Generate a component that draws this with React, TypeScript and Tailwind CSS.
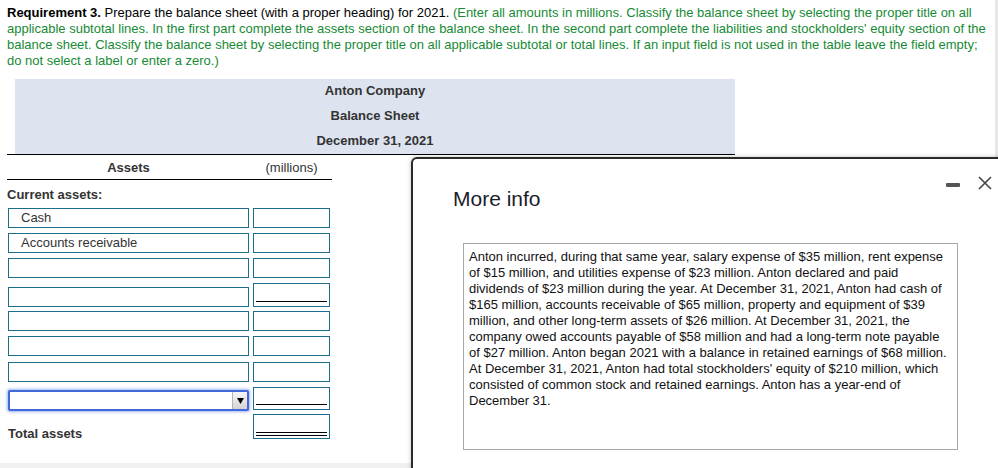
import React from "react";

function LabelBox({ text }: { text?: string }) {
  return (
    <div className="w-[241px] h-[20px] border border-[#1d6e8c] bg-white pl-[12px] leading-[18px] text-[#333] whitespace-nowrap">
      {text}
    </div>
  );
}

function AmountBox({ kind = "plain" }: { kind?: "plain" | "single" | "single2" | "double" }) {
  if (kind === "plain") {
    return <div className="w-[77px] h-[20px] border border-[#1d6e8c] bg-white" />;
  }
  if (kind === "single") {
    return (
      <div className="w-[77px] h-[24px] border border-[#1d6e8c] bg-white flex flex-col justify-end px-[2px] pb-[4px]">
        <div className="h-[1px] bg-black" />
      </div>
    );
  }
  if (kind === "single2") {
    return (
      <div className="w-[77px] h-[23px] mb-[1px] border border-[#1d6e8c] bg-white flex flex-col justify-end px-[2px] pb-[4px]">
        <div className="h-[1px] bg-black" />
      </div>
    );
  }
  return (
    <div className="w-[77px] h-[25px] border border-[#1d6e8c] bg-white flex flex-col justify-end gap-[2px] px-[2px] pb-[2px]">
      <div className="h-[1px] bg-black" />
      <div className="h-[1px] bg-black" />
    </div>
  );
}

const infoLines = [
  "Anton incurred, during that same year, salary expense of $35 million, rent expense",
  "of $15 million, and utilities expense of $23 million. Anton declared and paid",
  "dividends of $23 million during the year. At December 31, 2021, Anton had cash of",
  "$165 million, accounts receivable of $65 million, property and equipment of $39",
  "million, and other long-term assets of $26 million. At December 31, 2021, the",
  "company owed accounts payable of $58 million and had a long-term note payable",
  "of $27 million. Anton began 2021 with a balance in retained earnings of $68 million.",
  "At December 31, 2021, Anton had total stockholders' equity of $210 million, which",
  "consisted of common stock and retained earnings. Anton has a year-end of",
  "December 31.",
];

export default function App() {
  return (
    <div className="relative w-[998px] h-[468px] overflow-hidden bg-white font-['Liberation_Sans',Arial,sans-serif] text-[13px]">
      <div className="pl-[7px] pt-[5px]">
        <p className="leading-[16px] whitespace-nowrap text-black">
          <b>Requirement 3.</b> Prepare the balance sheet (with a proper heading) for 2021.{" "}
          <span className="text-[#168a34]">
            (Enter all amounts in millions. Classify the balance sheet by selecting the proper title on all
            <br />
            applicable subtotal lines. In the first part complete the assets section of the balance sheet. In the second part complete the liabilities and stockholders' equity section of the
            <br />
            balance sheet. Classify the balance sheet by selecting the proper title on all applicable subtotal or total lines. If an input field is not used in the table leave the field empty;
            <br />
            do not select a label or enter a zero.)
          </span>
        </p>

        <div className="mt-[10px] w-[728px] border-b border-black">
          <div className="ml-[8px] bg-[#dde4f0] font-bold text-[#333] text-center">
            <div className="h-[25px] leading-[23px]">Anton Company</div>
            <div className="h-[25px] leading-[23px]">Balance Sheet</div>
            <div className="h-[25px] leading-[23px]">December 31, 2021</div>
          </div>
        </div>

        <div className="w-[325px] h-[25px] border-b border-black flex items-center gap-[4px] pl-[1px] pt-[1px] text-[#333]">
          <div className="w-[241px] text-center font-bold">Assets</div>
          <div className="w-[77px] text-center">(millions)</div>
        </div>

        <div className="h-[23px] leading-[29px] font-bold text-[#333]">Current assets:</div>

        <div className="flex flex-col pl-[1px]">
          <div className="h-[25px] flex items-end gap-[4px]">
            <LabelBox text="Cash" />
            <AmountBox />
          </div>
          <div className="h-[25px] flex items-end gap-[4px]">
            <LabelBox text="Accounts receivable" />
            <AmountBox />
          </div>
          <div className="h-[25px] flex items-end gap-[4px]">
            <LabelBox />
            <AmountBox />
          </div>
          <div className="h-[29px] flex items-end gap-[4px]">
            <LabelBox />
            <AmountBox kind="single" />
          </div>
          <div className="h-[24px] flex items-end gap-[4px]">
            <LabelBox />
            <AmountBox />
          </div>
          <div className="h-[25px] flex items-end gap-[4px]">
            <LabelBox />
            <AmountBox />
          </div>
          <div className="h-[26px] flex items-end gap-[4px]">
            <LabelBox />
            <AmountBox />
          </div>
          <div className="h-[29px] flex items-end gap-[4px]">
            <div className="w-[241px] h-[21px] border-2 border-[#4169d8] rounded-[2px] bg-white shadow-[0_0_3px_1px_rgba(80,120,230,0.55)] flex justify-end">
              <div className="w-[15px] h-full bg-gradient-to-b from-[#f7f7f7] to-[#d4d4d4] border-l border-[#b5b5b5] flex items-center justify-center">
                <svg width="7" height="6" viewBox="0 0 7 6">
                  <polygon points="0,0 7,0 3.5,6" fill="#000" />
                </svg>
              </div>
            </div>
            <AmountBox kind="single2" />
          </div>
          <div className="h-[28px] flex items-end gap-[4px]">
            <div className="w-[241px] self-start mt-[15px] leading-[16px] font-bold text-[#333]">Total assets</div>
            <AmountBox kind="double" />
          </div>
        </div>
      </div>

      <div className="mt-[24px] h-[10px] bg-[#f0f0f0]" />

      <div className="absolute right-0 top-0 w-[3px] h-[157px] bg-[#e8e8e8]" />

      <div className="absolute left-[411px] top-[157px] w-[620px] h-[340px] bg-white border-2 border-[#2b2b2b] rounded-tl-[6px] shadow-[0_0_4px_rgba(0,0,0,0.25)]">
        <div className="flex items-start pl-[40px] pr-[37px] pt-[17px]">
          <div className="mt-[11px] text-[21px] leading-[24px] text-[#1c1c2c]">More info</div>
          <div className="ml-auto flex items-start gap-[18px]">
            <div className="mt-[7px] w-[14px] h-[4px] rounded-[1px] bg-[#555]" />
            <svg width="14" height="14" viewBox="0 0 14 14">
              <path d="M1 1 L13 13 M13 1 L1 13" stroke="#444" strokeWidth="1.6" fill="none" />
            </svg>
          </div>
        </div>
        <div className="ml-[50px] mt-[32px] w-[495px] h-[207px] border border-[#a8a8a8] px-[5px] pt-[5px] leading-[16px] text-[#111] whitespace-nowrap">
          {infoLines.map((l, i) => (
            <div key={i}>{l}</div>
          ))}
        </div>
      </div>
    </div>
  );
}
